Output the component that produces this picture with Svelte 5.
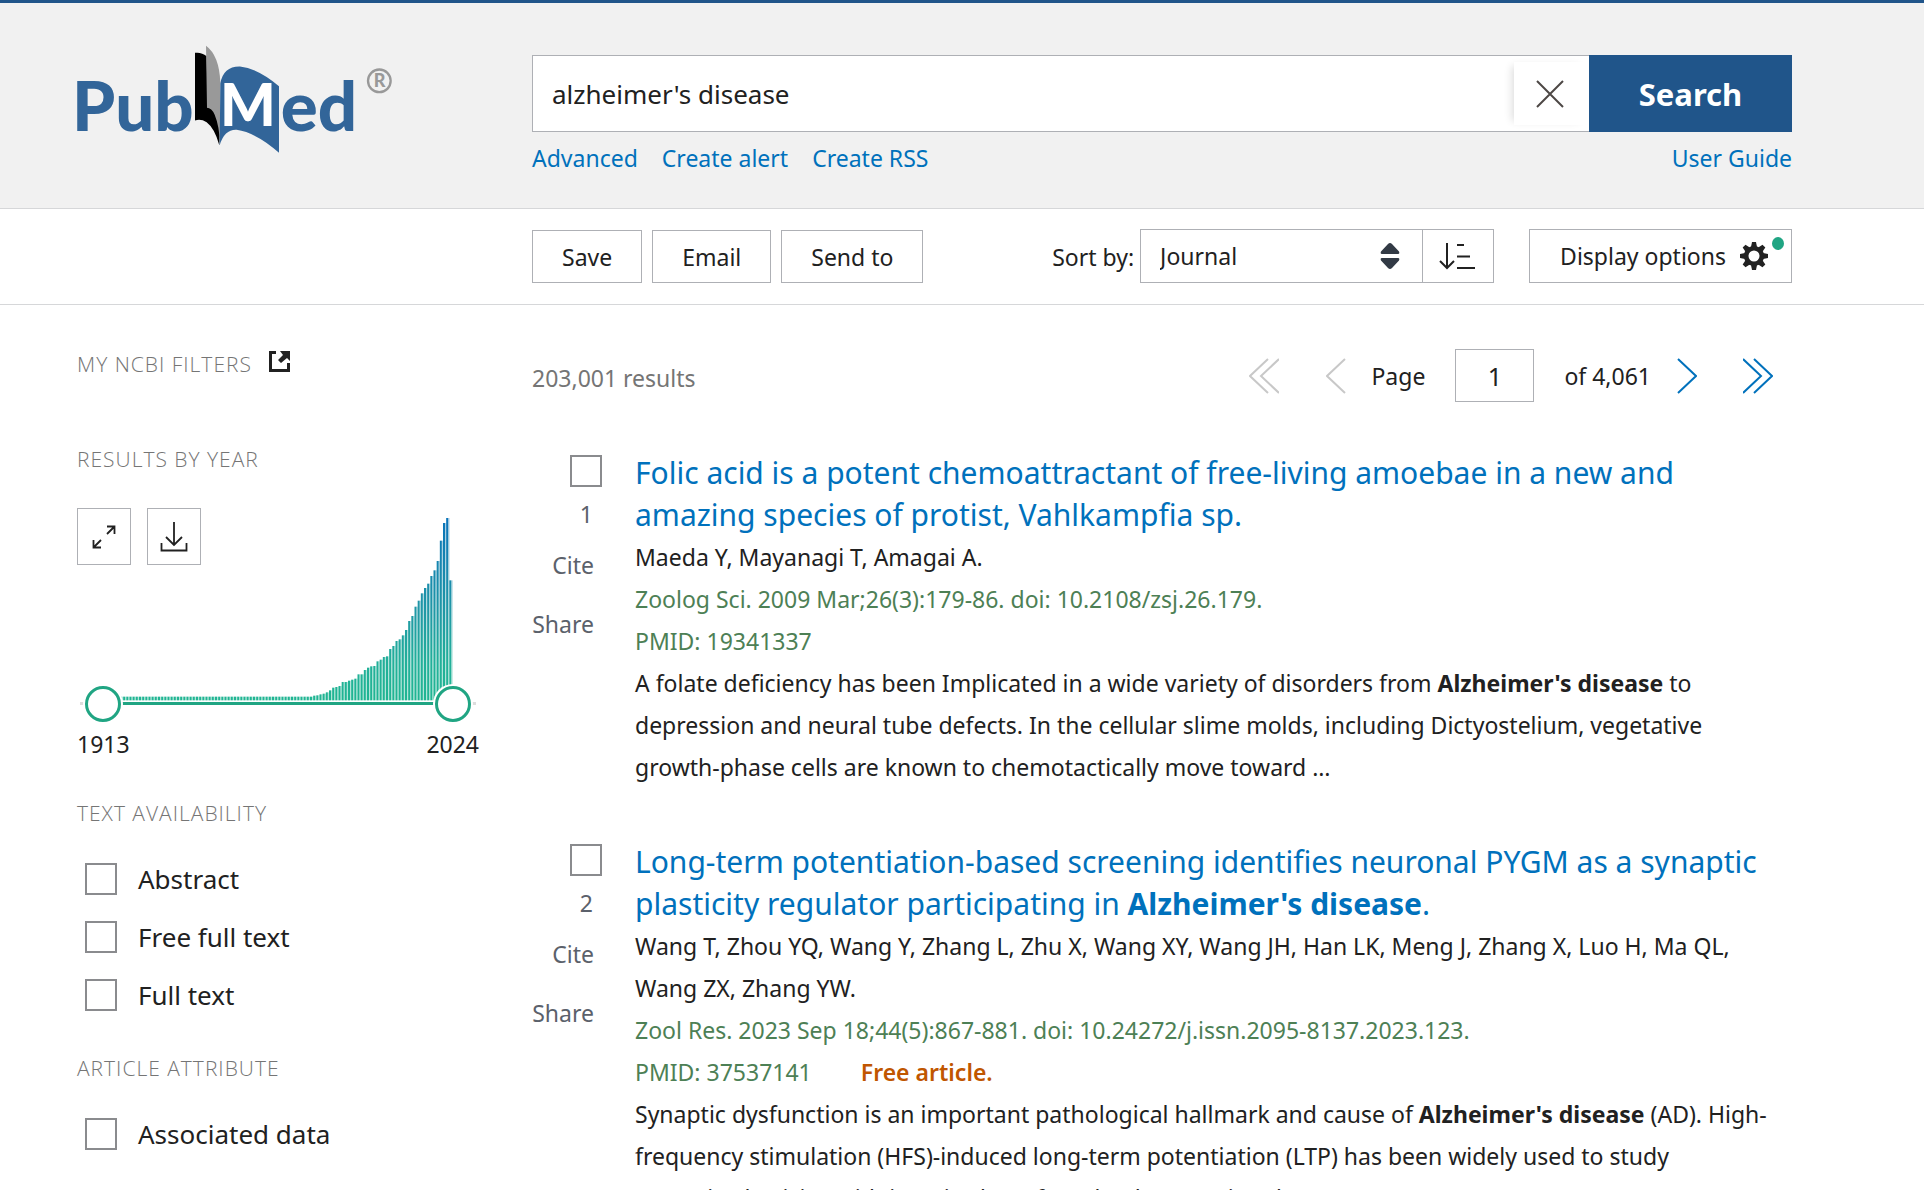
<script>
  let query = $state("alzheimer's disease");
  let sort = $state('Journal');
  let page = $state('1');
  let fromYear = $state(1913);
  let toYear = $state(2024);

  // Bar heights in chart units, 1913 to 2024.
  const early = Array.from({ length: 68 }, () => 11);
  const growth = [
    14, 15, 18, 20, 24, 30, 38, 40, 43, 55, 55, 59, 62, 65, 78, 78, 91, 98, 102, 103, 117, 122, 130, 132,
    154, 163, 178, 183, 195, 211, 238, 253, 281, 299, 321, 337, 350, 373, 390, 418, 479, 532, 547, 360
  ];
  const bars = [...early, ...growth];
  const step = 9.5;
  const firstX = 1171 - (bars.length - 1) * step;

  const availability = ['Abstract', 'Free full text', 'Full text'];
  const attributes = ['Associated data'];
</script>

{#snippet hit(text)}<b>{text}</b>{/snippet}

{#snippet filter(name)}
  <label class="filter"><input type="checkbox" class="box" />{name}</label>
{/snippet}

{#snippet side(n)}
  <div class="side">
    <input type="checkbox" class="box" id="pick-{n}" />
    <label class="num" for="pick-{n}">{n}</label>
    <button class="plain">Cite</button>
    <button class="plain">Share</button>
  </div>
{/snippet}

<header>
  <a class="logo" href="#home" aria-label="PubMed home">
    <svg viewBox="51 30 960 350" width="320" height="117">
      <g class="word">
        <text x="36" y="302">Pub</text>
        <text x="662" y="302">ed</text>
      </g>
      <path fill="#000" d="M405 68Q424 65 440 78L443 232Q474 236 480 300L478 345Q464 294 440 276Q422 265 405 271Z" />
      <path fill="#999" d="M438 47Q478 76 481 158L480 345Q479 290 464 254Q455 233 441 233Z" />
      <path fill="#326599" d="M481 160Q490 108 540 109Q592 114 657 168V368Q590 308 530 299Q494 297 479 345Z" />
      <text class="m" x="480" y="288">M</text>
      <circle cx="958" cy="152" r="34" fill="none" stroke="#999" stroke-width="7" />
      <text class="reg" x="941" y="171">R</text>
    </svg>
  </a>
  <div class="lookup">
    <form class="search" onsubmit={(e) => e.preventDefault()}>
      <div class="field">
        <input type="text" aria-label="Search term" bind:value={query} />
        <button type="button" class="clear" aria-label="Clear search" onclick={() => (query = '')}>
          <svg viewBox="0 0 28 28" width="28" height="28"><path d="M1 1L27 27M27 1L1 27" fill="none" stroke="#4d4845" stroke-width="2" /></svg>
        </button>
      </div>
      <button class="go">Search</button>
    </form>
    <nav class="links">
      <a href="#advanced">Advanced</a>
      <a href="#alert">Create alert</a>
      <a href="#rss">Create RSS</a>
      <a class="guide" href="#guide">User Guide</a>
    </nav>
  </div>
</header>

<div class="toolbar">
  <div class="tools">
    <button class="btn">Save</button>
    <button class="btn">Email</button>
    <button class="btn">Send to</button>
    <label class="sortlabel" for="sort">Sort by:</label>
    <div class="sort">
      <div class="pick">
        <select id="sort" bind:value={sort}>
          <option>Journal</option>
          <option>Best match</option>
          <option>Most recent</option>
        </select>
        <svg viewBox="0 0 20 26" width="20" height="26"><path d="M8 1Q10 -1 12 1L19 8.500Q20 11 18 11H2Q0 11 1 8.500ZM2 15H18Q20 15 19 17.500L12 25Q10 27 8 25L1 17.500Q0 15 2 15Z" fill="#323a45" /></svg>
      </div>
      <button class="order" aria-label="Reverse sort order">
        <svg viewBox="0 0 36 28" width="36" height="28"><path d="M8 1V26M1 19L8 26L15 19M18 3H25M18 14.500H31M18 26H36" fill="none" stroke="#212121" stroke-width="2" /></svg>
      </button>
    </div>
    <button class="btn display">
      Display options
      <svg viewBox="-14 -14 28 28" width="28" height="28">
        <circle r="7.800" fill="none" stroke="#212121" stroke-width="4.600" />
        {#each [0, 45, 90, 135, 180, 225, 270, 315] as a}
          <path d="M-3 -9L-2 -14H2L3 -9Z" fill="#212121" transform="rotate({a})" />
        {/each}
      </svg>
      <span class="dot"></span>
    </button>
  </div>
</div>

<main>
  <aside>
    <h2>MY NCBI FILTERS
      <a href="#filters" aria-label="Open My NCBI filters">
        <svg viewBox="0 0 21 21" width="21" height="21"><path d="M7 0H0V21H21V12H18V18H3V3H7ZM11 0H21V10L18 7L12 12L9 9L14 4Z" fill="#212121" /></svg>
      </a>
    </h2>
    <h2 class="byyear">RESULTS BY YEAR</h2>
    <div class="timeline">
      <div class="plot">
        <svg class="bars" viewBox="51 50 1206 552" width="402" height="184">
          <defs>
            <linearGradient id="depth" gradientUnits="userSpaceOnUse" x1="0" y1="50" x2="0" y2="600">
              <stop offset="0" stop-color="#0a73b9" />
              <stop offset="0.5" stop-color="#2097a6" />
              <stop offset="0.8" stop-color="#22b099" />
              <stop offset="1" stop-color="#20b592" />
            </linearGradient>
          </defs>
          {#each bars as h, i}
            <rect x={firstX + i * step - 3} y={600 - h} width="6" height={h} fill="url(#depth)" />
            <rect x={firstX + i * step + 3} y={600 - h} width="4" height={h} fill="url(#depth)" opacity="0.35" />
          {/each}
        </svg>
        <div class="chartbtns">
          <button class="mini" aria-label="Expand chart">
            <svg viewBox="0 0 24 24" width="24" height="24"><path d="M15 9L22 2M15 1.500H22.500V9M9 15L2 22M1.500 15V22.500H9" fill="none" stroke="#212121" stroke-width="1.800" /></svg>
          </button>
          <button class="mini" aria-label="Download chart data">
            <svg viewBox="0 0 28 30" width="28" height="30"><path d="M14 0V23M6 15L14 23L22 15M1.500 21V28.500H26.500V21" fill="none" stroke="#212121" stroke-width="1.800" /></svg>
          </button>
        </div>
      </div>
      <div class="slider">
        <input type="range" min="1913" max="2024" aria-label="From year" bind:value={fromYear} />
        <input type="range" min="1913" max="2024" aria-label="To year" bind:value={toYear} />
      </div>
      <div class="years"><span>{fromYear}</span><span>{toYear}</span></div>
    </div>
    <h2>TEXT AVAILABILITY</h2>
    <div class="filters">
      {#each availability as name}{@render filter(name)}{/each}
    </div>
    <h2>ARTICLE ATTRIBUTE</h2>
    <div class="filters">
      {#each attributes as name}{@render filter(name)}{/each}
    </div>
  </aside>

  <section>
    <div class="top">
      <p class="count">203,001 results</p>
      <div class="pager">
        <button class="arrow" aria-label="First page" disabled>
          <svg viewBox="0 0 30 36" width="30" height="36"><path d="M19 1L1 18L19 35M30 1L12 18L30 35" /></svg>
        </button>
        <button class="arrow prev" aria-label="Previous page" disabled>
          <svg viewBox="0 0 20 36" width="20" height="36"><path d="M19 1L1 18L19 35" /></svg>
        </button>
        <label for="page">Page</label>
        <input id="page" type="text" bind:value={page} />
        <span class="of">of 4,061</span>
        <button class="arrow next" aria-label="Next page">
          <svg viewBox="0 0 20 36" width="20" height="36"><path d="M1 1L19 18L1 35" /></svg>
        </button>
        <button class="arrow" aria-label="Last page">
          <svg viewBox="0 0 30 36" width="30" height="36"><path d="M0 1L18 18L0 35M11 1L29 18L11 35" /></svg>
        </button>
      </div>
    </div>

    <article>
      {@render side(1)}
      <div class="body">
        <h3><a href="#19341337">Folic acid is a potent chemoattractant of free-living amoebae in a new and amazing species of protist, Vahlkampfia sp.</a></h3>
        <p>Maeda Y, Mayanagi T, Amagai A.</p>
        <p class="cite">Zoolog Sci. 2009 Mar;26(3):179-86. doi: 10.2108/zsj.26.179.</p>
        <p class="cite">PMID: 19341337</p>
        <p>A folate deficiency has been Implicated in a wide variety of disorders from {@render hit("Alzheimer's disease")} to depression and neural tube defects. In the cellular slime molds, including Dictyostelium, vegetative growth-phase cells are known to chemotactically move toward …</p>
      </div>
    </article>

    <article>
      {@render side(2)}
      <div class="body">
        <h3><a href="#37537141">Long-term potentiation-based screening identifies neuronal PYGM as a synaptic plasticity regulator participating in {@render hit("Alzheimer's disease")}.</a></h3>
        <p>Wang T, Zhou YQ, Wang Y, Zhang L, Zhu X, Wang XY, Wang JH, Han LK, Meng J, Zhang X, Luo H, Ma QL, Wang ZX, Zhang YW.</p>
        <p class="cite">Zool Res. 2023 Sep 18;44(5):867-881. doi: 10.24272/j.issn.2095-8137.2023.123.</p>
        <p class="cite">PMID: 37537141<span class="free">Free article.</span></p>
        <p>Synaptic dysfunction is an important pathological hallmark and cause of {@render hit("Alzheimer's disease")} (AD). High-frequency stimulation (HFS)-induced long-term potentiation (LTP) has been widely used to study synaptic&nbsp;plasticity, with impaired LTP found to be associated …</p>
      </div>
    </article>
  </section>
</main>

<style>
  :global(body) {
    background: #fff;
    color: #212121;
    font-family: 'Segoe UI', 'Noto Sans', sans-serif;
    font-size: 23px;
    line-height: 42px;
  }
  :global(#app) {
    max-height: 100vh;
    overflow: hidden;
  }
  button, input, select {
    font: inherit;
    color: inherit;
    box-sizing: border-box;
    margin: 0;
  }
  button {
    background: #fff;
    cursor: pointer;
    padding: 0;
  }
  svg { display: block; }
  a { color: #0071bc; text-decoration: none; }
  p, h2, h3 { margin: 0; font-weight: 400; }

  header, .toolbar, main {
    display: grid;
    grid-template-columns: 455px minmax(0, 1fr);
    padding-left: 77px;
    padding-right: 132px;
  }
  header {
    background: #f1f1f1;
    border-top: 3px solid #20558a;
    border-bottom: 1px solid #d6d7d9;
    padding-top: 37px;
    padding-bottom: 29px;
  }
  .logo { justify-self: start; }
  .logo svg { overflow: visible; }
  .word { font: 900 207px Lato, sans-serif; fill: #326599; }
  .m { font: 900 176px Lato, sans-serif; fill: #fff; }
  .reg { font: 900 54px Lato, sans-serif; fill: #999; }
  .lookup { padding-top: 15px; }
  .search { display: flex; height: 77px; }
  .field {
    flex: 1;
    display: flex;
    align-items: center;
    background: #fff;
    border: 1px solid #aeb0b5;
    border-right: 0;
  }
  .field input {
    flex: 1;
    min-width: 0;
    border: 0;
    outline: 0;
    padding: 0 19px;
    font-size: 26px;
    background: none;
  }
  .clear {
    width: 75px;
    height: 63px;
    border: 0;
    display: grid;
    place-items: center;
    padding-right: 4px;
    box-shadow: -6px 0 8px -4px #ddd;
  }
  .go {
    width: 203px;
    border: 0;
    background: #20558a;
    color: #fff;
    font-size: 31px;
    font-weight: 700;
  }
  .links { display: flex; gap: 24px; padding-top: 5px; }
  .guide { margin-left: auto; }

  .toolbar { border-bottom: 1px solid #d6d7d9; padding-top: 20px; padding-bottom: 21px; }
  .tools { grid-column: 2; display: flex; align-items: flex-end; gap: 10px; }
  .btn { height: 53px; border: 1px solid #aeb0b5; padding: 0 29px; line-height: 50px; }
  .sortlabel { margin-left: auto; margin-right: -4px; line-height: 52px; }
  .sort { display: flex; box-sizing: border-box; height: 54px; border: 1px solid #aeb0b5; }
  .pick { display: grid; align-items: center; width: 281px; }
  .pick select {
    grid-area: 1 / 1;
    height: 52px;
    border: 0;
    appearance: none;
    background: #fff;
    padding: 0 19px;
  }
  .pick svg { grid-area: 1 / 1; justify-self: end; margin-right: 22px; pointer-events: none; }
  .order { border: 0; border-left: 1px solid #aeb0b5; width: 71px; padding-left: 16px; }
  .display {
    position: relative;
    display: flex;
    align-items: center;
    gap: 14px;
    height: 54px;
    margin-left: 25px;
    padding: 0 23px 0 30px;
  }
  .dot {
    position: absolute;
    top: 7px;
    right: 7px;
    width: 12px;
    height: 13px;
    border-radius: 50%;
    background: #20a583;
  }

  main { padding-top: 44px; }
  h2 {
    display: flex;
    gap: 17px;
    color: #757575;
    font-family: 'Segoe UI Light', 'Open Sans', sans-serif;
    font-weight: 300;
    font-size: 21px;
    letter-spacing: 1px;
    line-height: 30px;
  }
  h2 svg { margin-top: 2px; }
  .byyear { margin-top: 65px; }
  .timeline { width: 402px; margin: 34px 0; }
  .plot { display: grid; height: 194px; }
  .bars { grid-area: 1 / 1; margin-top: 9px; }
  .chartbtns { grid-area: 1 / 1; display: flex; gap: 16px; align-items: flex-start; }
  .mini { width: 54px; height: 57px; border: 1px solid #aeb0b5; display: grid; place-items: center; }
  .slider {
    display: grid;
    margin-top: -17px;
    padding: 0 8px;
    background: linear-gradient(#20a583, #20a583) center / 350px 3px no-repeat, linear-gradient(#ddd, #ddd) center / 396px 3px no-repeat;
  }
  .slider input {
    grid-area: 1 / 1;
    appearance: none;
    background: none;
    width: 100%;
    height: 37px;
    pointer-events: none;
  }
  .slider input::-webkit-slider-thumb {
    appearance: none;
    box-sizing: border-box;
    width: 36px;
    height: 36px;
    border: 3px solid #20a583;
    border-radius: 50%;
    background: #fff;
    box-shadow: 0 0 0 2px #fff;
    pointer-events: auto;
  }
  .years { display: flex; justify-content: space-between; line-height: 40px; margin-top: 2px; }
  .filters { display: grid; gap: 16px; padding: 30px 0 37px 8px; }
  .filter { display: flex; align-items: center; gap: 21px; font-size: 26px; }
  .box {
    appearance: none;
    width: 32px;
    height: 32px;
    border: 2px solid #8a8b8e;
    background: #fff;
  }

  .top { display: flex; justify-content: space-between; height: 53px; margin-bottom: 50px; }
  .count { color: #757575; line-height: 58px; }
  .pager { display: flex; align-items: center; padding-right: 19px; }
  .pager input {
    width: 79px;
    height: 53px;
    border: 1px solid #aeb0b5;
    text-align: center;
    margin: 0 30px;
    font-size: 25px;
  }
  .arrow { border: 0; }
  .arrow svg { fill: none; stroke: #0071bc; stroke-width: 2; }
  .arrow:disabled svg { stroke: #c8c8c8; }
  .prev { margin: 0 25px 0 47px; }
  .next { margin: 0 46px 0 26px; }

  article { display: grid; grid-template-columns: 70px minmax(0, 1fr); gap: 33px; margin-bottom: 53px; }
  .side { display: flex; flex-direction: column; align-items: flex-end; color: #5b616b; padding-top: 3px; }
  .num { padding-right: 9px; margin-top: 6px; line-height: 42px; }
  .plain { border: 0; color: inherit; padding-right: 8px; line-height: 42px; margin-top: 9px; }
  .plain + .plain { margin-top: 17px; }
  h3 { font-size: 30px; line-height: 42px; }
  b { font-weight: 700; }
  .cite { color: #4d8055; }
  .free { color: #c05600; font-weight: 600; margin-left: 49px; }
</style>
